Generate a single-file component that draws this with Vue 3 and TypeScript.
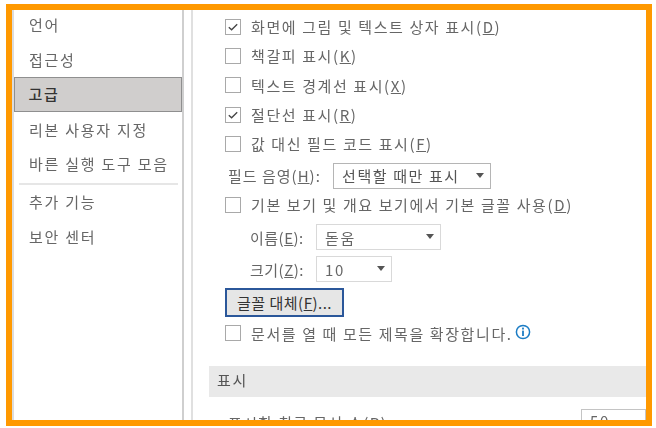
<script setup lang="ts">
interface NavItem { label: string; active?: boolean; sep?: boolean }
const nav: NavItem[] = [
  { label: '언어' },
  { label: '접근성' },
  { label: '고급', active: true },
  { label: '리본 사용자 지정' },
  { label: '바른 실행 도구 모음', sep: true },
  { label: '추가 기능' },
  { label: '보안 센터' }
]
interface Check { text: string; key: string; checked: boolean }
const checks: Check[] = [
  { text: '화면에 그림 및 텍스트 상자 표시', key: 'D', checked: true },
  { text: '책갈피 표시', key: 'K', checked: false },
  { text: '텍스트 경계선 표시', key: 'X', checked: false },
  { text: '절단선 표시', key: 'R', checked: true },
  { text: '값 대신 필드 코드 표시', key: 'F', checked: false }
]
</script>

<template>
  <div class="frame">
    <aside class="side">
      <template v-for="n in nav" :key="n.label">
        <div class="nav" :class="{ active: n.active }">{{ n.label }}</div>
        <div v-if="n.sep" class="sep"></div>
      </template>
    </aside>
    <main class="main">
      <div class="opts">
        <label v-for="c in checks" :key="c.key" class="row">
          <span class="box">
            <svg v-if="c.checked" viewBox="0 0 16 16" width="14" height="14"><path d="M3.2 8.2 6.4 11.2 12.8 4.8" fill="none" stroke="#444" stroke-width="1.5" /></svg>
          </span>
          <span class="t">{{ c.text }}(<u>{{ c.key }}</u>)</span>
        </label>
        <div class="field shade">
          <span class="t lab">필드 음영(<u>H</u>):</span>
          <div class="select s1"><span class="t dark">선택할 때만 표시</span><i class="caret"></i></div>
        </div>
        <label class="row base">
          <span class="box"></span>
          <span class="t">기본 보기 및 개요 보기에서 기본 글꼴 사용(<u>D</u>)</span>
        </label>
        <div class="field sub">
          <span class="t lab2">이름(<u>E</u>):</span>
          <div class="select s2"><span class="t">돋움</span><i class="caret"></i></div>
        </div>
        <div class="field sub">
          <span class="t lab2">크기(<u>Z</u>):</span>
          <div class="select s3"><span class="t">10</span><i class="caret"></i></div>
        </div>
        <button class="btn" type="button">글꼴 대체(<u>F</u>)...</button>
        <label class="row last">
          <span class="box"></span>
          <span class="t">문서를 열 때 모든 제목을 확장합니다.</span>
          <svg class="info" viewBox="0 0 16 16" width="16" height="16">
            <circle cx="8" cy="8" r="6.6" fill="#fff" stroke="#1c7cc4" stroke-width="1.5" />
            <rect x="7.1" y="3.6" width="1.8" height="1.9" fill="#1c7cc4" />
            <rect x="7.1" y="6.6" width="1.8" height="5.4" fill="#1c7cc4" />
          </svg>
        </label>
      </div>
      <div class="band"><span class="t dark">표시</span></div>
      <div class="field recent">
        <span class="t">표시할 최근 문서 수(<u>R</u>):</span>
        <div class="select s4"><span class="t">50</span></div>
      </div>
    </main>
  </div>
</template>

<style scoped>
.frame {
  box-sizing: border-box;
  width: 646px;
  height: 422px;
  margin: 4px 0 0 6px;
  border: 6px solid #ff9900;
  display: flex;
  overflow: hidden;
  background: #fff;
  font-family: "Noto Sans CJK KR", "Noto Sans", sans-serif;
  font-size: 15px;
  color: #666;
}
.side {
  box-sizing: border-box;
  width: 172px;
  flex: none;
  border-left: 2px solid #dcdcdc;
  border-right: 2px solid #cfcfcf;
}
.nav {
  height: 35px;
  line-height: 29px;
  padding-left: 15px;
  letter-spacing: 1.75px;
  white-space: nowrap;
  filter: blur(0.45px);
}
.nav:nth-child(1) { height: 33px; }
.nav:nth-child(2) { height: 34px; line-height: 33px; }
.nav:nth-child(4), .nav:nth-child(5) { height: 34px; }
.nav.active {
  box-sizing: border-box;
  height: 35px;
  line-height: 31px;
  background: #d0cecd;
  border: 1.5px solid #8f8f8f;
  padding-left: 13.5px;
  color: #333;
  font-weight: 500;
  margin-bottom: 3px;
  filter: none;
}
.sep {
  height: 2px;
  margin: 0 4px 2px 5px;
  background: #e6e6e6;
}
.main {
  flex: 1;
  min-width: 0;
  margin-left: 7px;
  border-left: 2px solid #e0e0e0;
  padding-left: 16px;
}
.opts {
  padding: 2px 0 0 16px;
  height: 356px;
  box-sizing: border-box;
}
.row {
  display: flex;
  align-items: center;
  height: 29.3px;
  white-space: nowrap;
}
.box {
  box-sizing: border-box;
  width: 16px;
  height: 16px;
  flex: none;
  border: 1.5px solid #a9a9a9;
  background: #fff;
  margin-right: 10px;
  display: flex;
  align-items: center;
  justify-content: center;
}
.t {
  letter-spacing: 1.6px;
  white-space: nowrap;
  filter: blur(0.45px);
  display: inline-block;
}
.dark { color: #555; }
.field {
  display: flex;
  align-items: center;
  white-space: nowrap;
}
.shade { height: 27px; margin: 4px 0 1px; }
.lab { width: 108px; padding-left: 3px; box-sizing: border-box; flex: none; letter-spacing: 1px; }
.base { height: 29px; margin-bottom: 5px; }
.sub { height: 26px; margin-bottom: 6px; }
.lab2 { width: 91px; padding-left: 25px; box-sizing: border-box; flex: none; letter-spacing: 0.5px; }
.select {
  box-sizing: border-box;
  height: 26px;
  border: 1.5px solid #d9d9d9;
  background: #fff;
  padding-left: 8px;
  display: flex;
  align-items: center;
  position: relative;
}
.s1 { width: 158px; border-color: #b5b5b5; }
.s2 { width: 125px; }
.s3 { width: 76px; }
.s4 { width: 70px; height: 30px; border-color: #c4c4c4; align-items: flex-start; }
.caret {
  position: absolute;
  right: 6px;
  top: 9px;
  width: 0;
  height: 0;
  border-left: 4.5px solid transparent;
  border-right: 4.5px solid transparent;
  border-top: 5px solid #555;
}
.btn {
  box-sizing: border-box;
  display: block;
  width: 119px;
  height: 29px;
  border: 2px solid #2b579a;
  background: #e6e6e6;
  color: #333;
  font: inherit;
  letter-spacing: 0.5px;
  padding: 0;
  margin-bottom: 1px;
}
.last { height: 30px; }
.info { margin: -3px 0 0 2px; flex: none; }
.band {
  box-sizing: border-box;
  height: 31px;
  background: #e9e9e9;
  padding: 0 0 5px 8px;
  display: flex;
  align-items: center;
}
.recent {
  margin-top: 12px;
  padding-left: 19px;
  align-items: flex-start;
}
.recent > .t { width: 353px; flex: none; margin-top: 3px; letter-spacing: 1.35px; }
</style>

<style>
html, body { margin: 0; background: #fff; }
</style>
